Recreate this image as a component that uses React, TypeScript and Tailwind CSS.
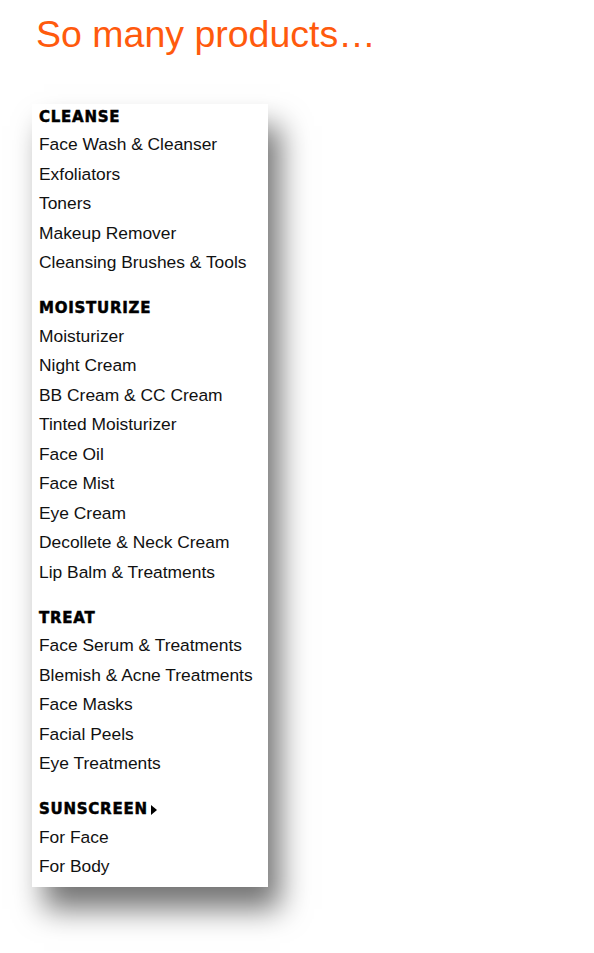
import React from "react";

const sections: { title: string; arrow?: boolean; items: string[] }[] = [
  { title: "CLEANSE", items: ["Face Wash & Cleanser", "Exfoliators", "Toners", "Makeup Remover", "Cleansing Brushes & Tools"] },
  {
    title: "MOISTURIZE",
    items: [
      "Moisturizer",
      "Night Cream",
      "BB Cream & CC Cream",
      "Tinted Moisturizer",
      "Face Oil",
      "Face Mist",
      "Eye Cream",
      "Decollete & Neck Cream",
      "Lip Balm & Treatments",
    ],
  },
  { title: "TREAT", items: ["Face Serum & Treatments", "Blemish & Acne Treatments", "Face Masks", "Facial Peels", "Eye Treatments"] },
  { title: "SUNSCREEN", arrow: true, items: ["For Face", "For Body"] },
];

export default function App() {
  return (
    <div className="w-[594px] h-[953px] bg-white relative overflow-hidden" style={{ fontFamily: '"Liberation Sans", Arial, sans-serif' }}>
      <div className="pl-[36px] pt-[12px] text-[37.5px] leading-[44px] text-[#ff5a0d]">So many products…</div>
      <div className="ml-[32px] mt-[48px] w-[236px] bg-white pl-[7px] pb-[5px] shadow-[12px_22px_28px_rgba(0,0,0,0.55)] flex flex-col gap-[18px]">
        {sections.map((s) => (
          <div key={s.title} className="flex flex-col">
            <div className="h-[26px] flex items-center text-black" style={{ fontFamily: '"DejaVu Sans", sans-serif' }}>
              <span className="text-[15px] font-bold tracking-[0.05em] [-webkit-text-stroke:0.5px_black]">{s.title}</span>
              {s.arrow && (
                <svg width="6" height="10" viewBox="0 0 6 10" className="ml-[3px]">
                  <path d="M0 0 L6 5 L0 10 Z" fill="#000" />
                </svg>
              )}
            </div>
            {s.items.map((it) => (
              <div key={it} className="h-[29.5px] leading-[29.5px] text-[17.4px] text-[#111]">
                {it}
              </div>
            ))}
          </div>
        ))}
      </div>
    </div>
  );
}
